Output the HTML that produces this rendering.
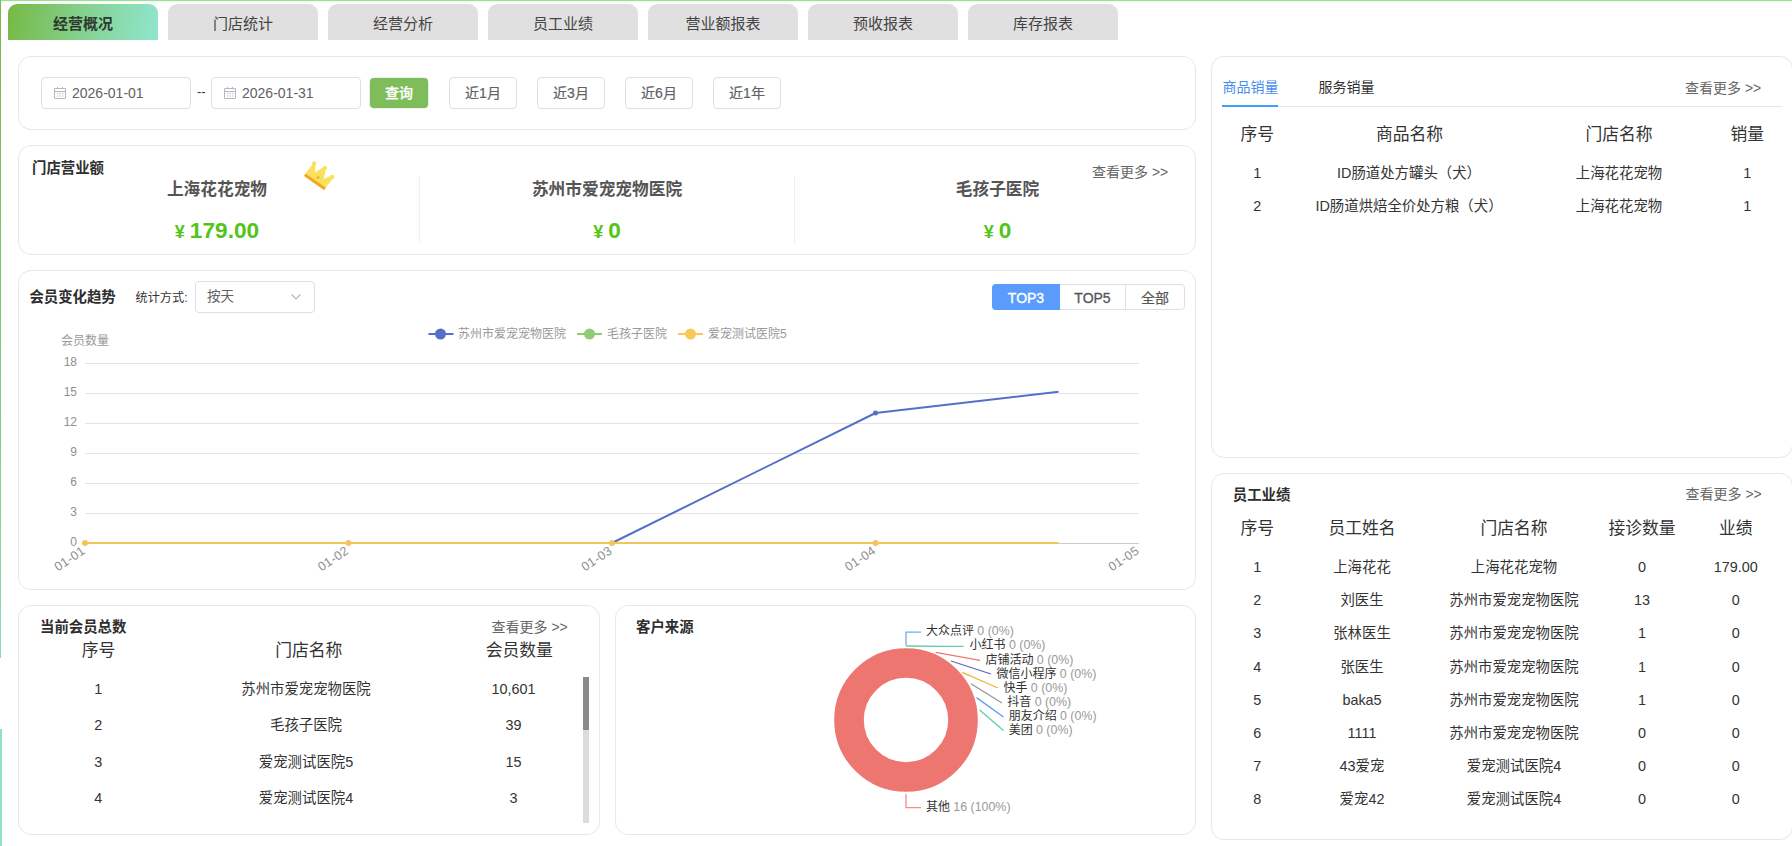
<!DOCTYPE html>
<html lang="zh-CN"><head><meta charset="utf-8"><title>经营概况</title>
<style>
html,body{margin:0;padding:0;}
body{width:1792px;height:846px;overflow:hidden;position:relative;background:#fff;font-family:"Liberation Sans", "Noto Sans CJK SC", sans-serif;}
.b{position:absolute;box-sizing:border-box;}
.t{position:absolute;height:24px;line-height:24px;white-space:nowrap;}
.card{position:absolute;box-sizing:border-box;border:1px solid #e5e7ee;border-radius:13px;background:#fff;}
.tab{position:absolute;top:4px;width:150px;height:36px;line-height:39px;text-align:center;font-size:15px;color:#444;background:#e0e0e0;border-radius:9px 9px 0 0;}
.inp{position:absolute;box-sizing:border-box;border:1px solid #dcdfe6;border-radius:4px;background:#fff;}
.btn{-webkit-text-stroke:0.2px currentColor;position:absolute;box-sizing:border-box;border:1px solid #dcdfe6;border-radius:4px;background:#fff;color:#606266;font-size:14px;text-align:center;}
svg{position:absolute;left:0;top:0;overflow:visible;}
svg text{font-family:"Liberation Sans", "Noto Sans CJK SC", sans-serif;}
</style></head><body>

<div class="b" style="left:0px;top:0px;width:1792px;height:1px;background:#8ee888;"></div>
<div class="b" style="left:1px;top:1px;width:1791px;height:2px;background:linear-gradient(#fbf1fb,#fefbfe);"></div>
<div class="b" style="left:0px;top:0px;width:1px;height:658px;background:linear-gradient(to bottom,#78bb4c 0%,#7cc46a 40%,#8fdcb8 100%);"></div>
<div class="b" style="left:0px;top:729px;width:2px;height:117px;background:#8fe3c8;"></div>
<div class="tab" style="left:8px;background:linear-gradient(100deg,#76b943 0%,#86d397 55%,#90e6cf 100%);color:#2e3a2e;font-weight:700;">经营概况</div>
<div class="tab" style="left:168px;">门店统计</div>
<div class="tab" style="left:328px;">经营分析</div>
<div class="tab" style="left:488px;">员工业绩</div>
<div class="tab" style="left:648px;">营业额报表</div>
<div class="tab" style="left:808px;">预收报表</div>
<div class="tab" style="left:968px;">库存报表</div>
<div class="card" style="left:18px;top:56px;width:1178px;height:74px;"></div>
<div class="card" style="left:18px;top:145px;width:1178px;height:110px;"></div>
<div class="card" style="left:18px;top:270px;width:1178px;height:320px;"></div>
<div class="card" style="left:18px;top:605px;width:582px;height:230px;"></div>
<div class="card" style="left:615px;top:605px;width:581px;height:230px;"></div>
<div class="card" style="left:1211px;top:56px;width:582px;height:402px;"></div>
<div class="card" style="left:1211px;top:473px;width:582px;height:367px;"></div>
<div class="inp" style="left:41px;top:77px;width:150px;height:32px;"></div>
<div class="inp" style="left:211px;top:77px;width:150px;height:32px;"></div>
<svg width="1792" height="846" style="pointer-events:none"><g fill="none" stroke="#b4b7bf" stroke-width="1"><rect x="54.5" y="88.5" width="11" height="10" rx="0.5"/><line x1="54.5" y1="91.5" x2="65.5" y2="91.5"/><line x1="57.5" y1="87" x2="57.5" y2="89"/><line x1="62.5" y1="87" x2="62.5" y2="89"/></g><g fill="#c0c4cc"><rect x="57" y="93" width="1.5" height="1"/><rect x="59.5" y="93" width="1.5" height="1"/><rect x="62" y="93" width="1.5" height="1"/><rect x="57" y="95.5" width="1.5" height="1"/><rect x="59.5" y="95.5" width="1.5" height="1"/><rect x="62" y="95.5" width="1.5" height="1"/></g></svg>
<svg width="1792" height="846" style="pointer-events:none"><g fill="none" stroke="#b4b7bf" stroke-width="1"><rect x="224.5" y="88.5" width="11" height="10" rx="0.5"/><line x1="224.5" y1="91.5" x2="235.5" y2="91.5"/><line x1="227.5" y1="87" x2="227.5" y2="89"/><line x1="232.5" y1="87" x2="232.5" y2="89"/></g><g fill="#c0c4cc"><rect x="227" y="93" width="1.5" height="1"/><rect x="229.5" y="93" width="1.5" height="1"/><rect x="232" y="93" width="1.5" height="1"/><rect x="227" y="95.5" width="1.5" height="1"/><rect x="229.5" y="95.5" width="1.5" height="1"/><rect x="232" y="95.5" width="1.5" height="1"/></g></svg>
<div class="t" style="left:72.00px;text-align:left;top:80.60px;font-size:14px;color:#606266;font-weight:400;">2026-01-01</div>
<div class="t" style="left:242.00px;text-align:left;top:80.60px;font-size:14px;color:#606266;font-weight:400;">2026-01-31</div>
<div class="t" style="left:197.00px;text-align:left;top:80.00px;font-size:13px;color:#333;font-weight:400;">--</div>
<div class="btn" style="left:370px;top:78px;width:58px;height:30px;line-height:30px;background:#7ebd5a;border:none;box-shadow:0 0 0 0.6px #d8dce8;color:#fff;font-weight:500;-webkit-text-stroke:0.25px #fff;">查询</div>
<div class="btn" style="left:449px;top:77px;width:68px;height:32px;line-height:30px;">近1月</div>
<div class="btn" style="left:537px;top:77px;width:68px;height:32px;line-height:30px;">近3月</div>
<div class="btn" style="left:625px;top:77px;width:68px;height:32px;line-height:30px;">近6月</div>
<div class="btn" style="left:713px;top:77px;width:68px;height:32px;line-height:30px;">近1年</div>
<div class="t" style="left:32.00px;text-align:left;top:156.00px;font-size:14.4px;color:#2e2e2e;font-weight:700;">门店营业额</div>
<div class="t" style="left:1092.00px;text-align:left;top:160.00px;font-size:14px;color:#666;font-weight:400;">查看更多 &gt;&gt;</div>
<div class="t" style="left:67.00px;width:300px;text-align:center;top:178.00px;font-size:16.7px;color:#555;font-weight:700;">上海花花宠物</div>
<div class="t" style="left:67.00px;width:300px;text-align:center;top:219.00px;font-size:22.6px;color:#52c41a;font-weight:700;letter-spacing:0.05px;"><span style="font-size:18px;font-weight:700;margin-right:5px;letter-spacing:0;">¥</span><span>179.00</span></div>
<div class="t" style="left:457.00px;width:300px;text-align:center;top:178.00px;font-size:16.7px;color:#555;font-weight:700;">苏州市爱宠宠物医院</div>
<div class="t" style="left:457.00px;width:300px;text-align:center;top:219.00px;font-size:22.6px;color:#52c41a;font-weight:700;letter-spacing:0.05px;"><span style="font-size:18px;font-weight:700;margin-right:5px;letter-spacing:0;">¥</span><span>0</span></div>
<div class="t" style="left:847.50px;width:300px;text-align:center;top:178.00px;font-size:16.7px;color:#555;font-weight:700;">毛孩子医院</div>
<div class="t" style="left:847.50px;width:300px;text-align:center;top:219.00px;font-size:22.6px;color:#52c41a;font-weight:700;letter-spacing:0.05px;"><span style="font-size:18px;font-weight:700;margin-right:5px;letter-spacing:0;">¥</span><span>0</span></div>
<div class="b" style="left:419px;top:176px;width:1px;height:68px;background:#eef0f4;"></div>
<div class="b" style="left:794px;top:176px;width:1px;height:68px;background:#eef0f4;"></div>
<svg width="1792" height="846"><polygon points="305.4,173.6 312.6,164.2 315.6,163.6 314.8,172.6 323.4,167.2 326.2,168.6 323.6,179.0 331.4,175.6 333.2,178.2 325.5,187.8" fill="#f9e05e"/><circle cx="314.1" cy="163.3" r="2.1" fill="#f9e05e"/><circle cx="324.9" cy="167.9" r="2.1" fill="#f9e05e"/><circle cx="332.3" cy="176.9" r="2.1" fill="#f9e05e"/><polygon points="305.6,173.4 325.8,187.6 324.2,190.3 303.9,176.0" fill="#f6a623"/><polygon points="318.1,175.7 319.6,177.5 318.1,179.3 316.6,177.5" fill="#f6a623"/></svg>
<div class="t" style="left:29.40px;text-align:left;top:284.60px;font-size:14.4px;color:#2e2e2e;font-weight:700;">会员变化趋势</div>
<div class="t" style="left:135.50px;text-align:left;top:286.00px;font-size:12.2px;color:#333;font-weight:400;">统计方式:</div>
<div class="inp" style="left:195px;top:281px;width:120px;height:32px;"></div>
<div class="t" style="left:207.00px;text-align:left;top:285.00px;font-size:13.6px;color:#606266;font-weight:400;">按天</div>
<svg width="1792" height="846"><polyline points="291.5,294.5 296,299 300.5,294.5" fill="none" stroke="#b4b8c0" stroke-width="1.2"/></svg>
<div class="btn" style="left:992px;top:284px;width:193px;height:26px;"></div>
<div class="b" style="left:992px;top:284px;width:68px;height:26px;background:#5a9cfc;border-radius:4px 0 0 4px;"></div>
<div class="b" style="left:1125px;top:284px;width:1px;height:26px;background:#dcdfe6;"></div>
<div class="t" style="left:876.00px;width:300px;text-align:center;top:285.50px;font-size:14px;color:#fff;font-weight:400;-webkit-text-stroke:0.35px #fff;">TOP3</div>
<div class="t" style="left:942.50px;width:300px;text-align:center;top:285.50px;font-size:14px;color:#555;font-weight:400;-webkit-text-stroke:0.3px #555;">TOP5</div>
<div class="t" style="left:1005.00px;width:300px;text-align:center;top:285.50px;font-size:14px;color:#555;font-weight:400;-webkit-text-stroke:0.2px #555;">全部</div>
<svg width="1792" height="846"><line x1="85" y1="363.5" x2="1139" y2="363.5" stroke="#e4e4e4" stroke-width="1"/><text x="77" y="366.0" font-size="12" fill="#8f8f8f" text-anchor="end">18</text><line x1="85" y1="393.5" x2="1139" y2="393.5" stroke="#e4e4e4" stroke-width="1"/><text x="77" y="396.0" font-size="12" fill="#8f8f8f" text-anchor="end">15</text><line x1="85" y1="423.5" x2="1139" y2="423.5" stroke="#e4e4e4" stroke-width="1"/><text x="77" y="426.0" font-size="12" fill="#8f8f8f" text-anchor="end">12</text><line x1="85" y1="453.5" x2="1139" y2="453.5" stroke="#e4e4e4" stroke-width="1"/><text x="77" y="456.0" font-size="12" fill="#8f8f8f" text-anchor="end">9</text><line x1="85" y1="483.5" x2="1139" y2="483.5" stroke="#e4e4e4" stroke-width="1"/><text x="77" y="486.0" font-size="12" fill="#8f8f8f" text-anchor="end">6</text><line x1="85" y1="513.5" x2="1139" y2="513.5" stroke="#e4e4e4" stroke-width="1"/><text x="77" y="516.0" font-size="12" fill="#8f8f8f" text-anchor="end">3</text><line x1="85" y1="543.5" x2="1139" y2="543.5" stroke="#ccc" stroke-width="1"/><text x="77" y="546.0" font-size="12" fill="#8f8f8f" text-anchor="end">0</text><text x="61" y="344.5" font-size="12" fill="#999">会员数量</text><text transform="translate(83.8,549.4) rotate(-34)" font-size="12.5" letter-spacing="0.35" fill="#8f8f8f" text-anchor="end" dominant-baseline="central">01-01</text><text transform="translate(347.3,549.4) rotate(-34)" font-size="12.5" letter-spacing="0.35" fill="#8f8f8f" text-anchor="end" dominant-baseline="central">01-02</text><text transform="translate(610.8,549.4) rotate(-34)" font-size="12.5" letter-spacing="0.35" fill="#8f8f8f" text-anchor="end" dominant-baseline="central">01-03</text><text transform="translate(874.3,549.4) rotate(-34)" font-size="12.5" letter-spacing="0.35" fill="#8f8f8f" text-anchor="end" dominant-baseline="central">01-04</text><text transform="translate(1137.8,549.4) rotate(-34)" font-size="12.5" letter-spacing="0.35" fill="#8f8f8f" text-anchor="end" dominant-baseline="central">01-05</text><polyline points="85,543 348.5,543 612,543 875.5,413 1058.5,391.8" fill="none" stroke="#5470c6" stroke-width="2" stroke-linejoin="round"/><circle cx="875.5" cy="413" r="2.5" fill="#5470c6"/><polyline points="85,543 1058.5,543" fill="none" stroke="#f0c65a" stroke-width="2"/><circle cx="85" cy="543" r="3" fill="#f0c65a"/><circle cx="348.5" cy="543" r="3" fill="#f0c65a"/><circle cx="612" cy="543" r="3" fill="#f0c65a"/><circle cx="875.5" cy="543" r="3" fill="#f0c65a"/><line x1="428.5" y1="334" x2="453.5" y2="334" stroke="#5470c6" stroke-width="2"/><circle cx="440.5" cy="334" r="5.5" fill="#5470c6"/><text x="458" y="337.5" font-size="12" fill="#999">苏州市爱宠宠物医院</text><line x1="577" y1="334" x2="602" y2="334" stroke="#91cc75" stroke-width="2"/><circle cx="589.5" cy="334" r="5.5" fill="#91cc75"/><text x="607" y="337.5" font-size="12" fill="#999">毛孩子医院</text><line x1="678" y1="334" x2="703" y2="334" stroke="#fac858" stroke-width="2"/><circle cx="690.5" cy="334" r="5.5" fill="#fac858"/><text x="708" y="337.5" font-size="12" fill="#999">爱宠测试医院5</text></svg>
<div class="t" style="left:40.00px;text-align:left;top:614.80px;font-size:14.4px;color:#2e2e2e;font-weight:700;">当前会员总数</div>
<div class="t" style="left:491.50px;text-align:left;top:614.50px;font-size:14px;color:#666;font-weight:400;">查看更多 &gt;&gt;</div>
<div class="t" style="left:-51.50px;width:300px;text-align:center;top:639.00px;font-size:16.8px;color:#333;font-weight:400;">序号</div>
<div class="t" style="left:158.80px;width:300px;text-align:center;top:639.00px;font-size:16.8px;color:#333;font-weight:400;">门店名称</div>
<div class="t" style="left:369.30px;width:300px;text-align:center;top:639.00px;font-size:16.8px;color:#333;font-weight:400;">会员数量</div>
<div class="t" style="left:-51.70px;width:300px;text-align:center;top:677.30px;font-size:14.4px;color:#333;font-weight:400;">1</div>
<div class="t" style="left:156.00px;width:300px;text-align:center;top:677.30px;font-size:14.4px;color:#333;font-weight:400;">苏州市爱宠宠物医院</div>
<div class="t" style="left:363.50px;width:300px;text-align:center;top:677.30px;font-size:14.4px;color:#333;font-weight:400;">10,601</div>
<div class="t" style="left:-51.70px;width:300px;text-align:center;top:713.00px;font-size:14.4px;color:#333;font-weight:400;">2</div>
<div class="t" style="left:156.00px;width:300px;text-align:center;top:713.00px;font-size:14.4px;color:#333;font-weight:400;">毛孩子医院</div>
<div class="t" style="left:363.50px;width:300px;text-align:center;top:713.00px;font-size:14.4px;color:#333;font-weight:400;">39</div>
<div class="t" style="left:-51.70px;width:300px;text-align:center;top:750.00px;font-size:14.4px;color:#333;font-weight:400;">3</div>
<div class="t" style="left:156.00px;width:300px;text-align:center;top:750.00px;font-size:14.4px;color:#333;font-weight:400;">爱宠测试医院5</div>
<div class="t" style="left:363.50px;width:300px;text-align:center;top:750.00px;font-size:14.4px;color:#333;font-weight:400;">15</div>
<div class="t" style="left:-51.70px;width:300px;text-align:center;top:786.00px;font-size:14.4px;color:#333;font-weight:400;">4</div>
<div class="t" style="left:156.00px;width:300px;text-align:center;top:786.00px;font-size:14.4px;color:#333;font-weight:400;">爱宠测试医院4</div>
<div class="t" style="left:363.50px;width:300px;text-align:center;top:786.00px;font-size:14.4px;color:#333;font-weight:400;">3</div>
<div class="b" style="left:583px;top:677px;width:6px;height:146px;background:#dcdcdc;"></div>
<div class="b" style="left:583px;top:677px;width:6px;height:53px;background:#8a8a8a;"></div>
<div class="t" style="left:636.00px;text-align:left;top:614.80px;font-size:14.4px;color:#2e2e2e;font-weight:700;">客户来源</div>
<svg width="1792" height="846"><circle cx="906" cy="720" r="57" fill="none" stroke="#ed7670" stroke-width="29.6"/><polyline points="906,645.5 906,632.2 921,632.2" fill="none" stroke="#73a9ee" stroke-width="1.3"/><polyline points="906,646 948,646.3 963.5,646.3" fill="none" stroke="#5fcfa5" stroke-width="1.3"/><polyline points="935.6,652.3 980,660.3" fill="none" stroke="#ee7670" stroke-width="1.3"/><polyline points="951,661 991,674" fill="none" stroke="#5a6ab0" stroke-width="1.3"/><polyline points="962.3,672.4 998,688" fill="none" stroke="#f0b43c" stroke-width="1.3"/><polyline points="971,683.8 1002,703" fill="none" stroke="#999999" stroke-width="1.3"/><polyline points="976.5,697.6 1003.5,717" fill="none" stroke="#5b9cf5" stroke-width="1.3"/><polyline points="979.6,710 1003.5,730.5" fill="none" stroke="#5fcfa5" stroke-width="1.3"/><polyline points="906,794 906,807.6 921,807.6" fill="none" stroke="#f0908b" stroke-width="1.3"/><text x="926" y="635.2" font-size="12" fill="#333">大众点评 <tspan fill="#999" font-size="12.4">0 (0%)</tspan></text><text x="969.6" y="649.2" font-size="12" fill="#333">小红书 <tspan fill="#999" font-size="12.4">0 (0%)</tspan></text><text x="985.5" y="663.9" font-size="12" fill="#333">店铺活动 <tspan fill="#999" font-size="12.4">0 (0%)</tspan></text><text x="996.5" y="677.7" font-size="12" fill="#333">微信小程序 <tspan fill="#999" font-size="12.4">0 (0%)</tspan></text><text x="1003.5" y="691.9" font-size="12" fill="#333">快手 <tspan fill="#999" font-size="12.4">0 (0%)</tspan></text><text x="1007.3" y="705.7" font-size="12" fill="#333">抖音 <tspan fill="#999" font-size="12.4">0 (0%)</tspan></text><text x="1008.7" y="719.6" font-size="12" fill="#333">朋友介绍 <tspan fill="#999" font-size="12.4">0 (0%)</tspan></text><text x="1008.7" y="734.0" font-size="12" fill="#333">美团 <tspan fill="#999" font-size="12.4">0 (0%)</tspan></text><text x="926" y="810.9" font-size="12" fill="#333">其他 <tspan fill="#999" font-size="12.4">16 (100%)</tspan></text></svg>
<div class="t" style="left:1222.50px;text-align:left;top:75.30px;font-size:14px;color:#4a8df0;font-weight:400;">商品销量</div>
<div class="t" style="left:1318.50px;text-align:left;top:75.30px;font-size:14px;color:#303133;font-weight:400;">服务销量</div>
<div class="t" style="left:1685.00px;text-align:left;top:76.00px;font-size:14px;color:#666;font-weight:400;">查看更多 &gt;&gt;</div>
<div class="b" style="left:1222px;top:105px;width:560px;height:2px;background:#e4e7ed;top:105.5px;height:1.5px;"></div>
<div class="b" style="left:1222px;top:104px;width:56px;height:2px;background:#409eff;top:104.5px;"></div>
<div class="t" style="left:1107.30px;width:300px;text-align:center;top:123.00px;font-size:16.8px;color:#333;font-weight:400;">序号</div>
<div class="t" style="left:1259.50px;width:300px;text-align:center;top:123.00px;font-size:16.8px;color:#333;font-weight:400;">商品名称</div>
<div class="t" style="left:1469.00px;width:300px;text-align:center;top:123.00px;font-size:16.8px;color:#333;font-weight:400;">门店名称</div>
<div class="t" style="left:1597.30px;width:300px;text-align:center;top:123.00px;font-size:16.8px;color:#333;font-weight:400;">销量</div>
<div class="t" style="left:1107.30px;width:300px;text-align:center;top:161.00px;font-size:14.4px;color:#333;font-weight:400;">1</div>
<div class="t" style="left:1259.00px;width:300px;text-align:center;top:161.00px;font-size:14.4px;color:#333;font-weight:400;">ID肠道处方罐头（犬）</div>
<div class="t" style="left:1469.00px;width:300px;text-align:center;top:161.00px;font-size:14.4px;color:#333;font-weight:400;">上海花花宠物</div>
<div class="t" style="left:1597.30px;width:300px;text-align:center;top:161.00px;font-size:14.4px;color:#333;font-weight:400;">1</div>
<div class="t" style="left:1107.30px;width:300px;text-align:center;top:193.80px;font-size:14.4px;color:#333;font-weight:400;">2</div>
<div class="t" style="left:1259.00px;width:300px;text-align:center;top:193.80px;font-size:14.4px;color:#333;font-weight:400;">ID肠道烘焙全价处方粮（犬）</div>
<div class="t" style="left:1469.00px;width:300px;text-align:center;top:193.80px;font-size:14.4px;color:#333;font-weight:400;">上海花花宠物</div>
<div class="t" style="left:1597.30px;width:300px;text-align:center;top:193.80px;font-size:14.4px;color:#333;font-weight:400;">1</div>
<div class="t" style="left:1232.80px;text-align:left;top:482.80px;font-size:14.4px;color:#2e2e2e;font-weight:700;">员工业绩</div>
<div class="t" style="left:1685.50px;text-align:left;top:481.80px;font-size:14px;color:#666;font-weight:400;">查看更多 &gt;&gt;</div>
<div class="t" style="left:1107.30px;width:300px;text-align:center;top:517.00px;font-size:16.8px;color:#333;font-weight:400;">序号</div>
<div class="t" style="left:1212.00px;width:300px;text-align:center;top:517.00px;font-size:16.8px;color:#333;font-weight:400;">员工姓名</div>
<div class="t" style="left:1364.00px;width:300px;text-align:center;top:517.00px;font-size:16.8px;color:#333;font-weight:400;">门店名称</div>
<div class="t" style="left:1492.00px;width:300px;text-align:center;top:517.00px;font-size:16.8px;color:#333;font-weight:400;">接诊数量</div>
<div class="t" style="left:1585.70px;width:300px;text-align:center;top:517.00px;font-size:16.8px;color:#333;font-weight:400;">业绩</div>
<div class="t" style="left:1107.30px;width:300px;text-align:center;top:555.20px;font-size:14.4px;color:#333;font-weight:400;">1</div>
<div class="t" style="left:1212.00px;width:300px;text-align:center;top:555.20px;font-size:14.4px;color:#333;font-weight:400;">上海花花</div>
<div class="t" style="left:1364.00px;width:300px;text-align:center;top:555.20px;font-size:14.4px;color:#333;font-weight:400;">上海花花宠物</div>
<div class="t" style="left:1492.00px;width:300px;text-align:center;top:555.20px;font-size:14.4px;color:#333;font-weight:400;">0</div>
<div class="t" style="left:1585.70px;width:300px;text-align:center;top:555.20px;font-size:14.4px;color:#333;font-weight:400;">179.00</div>
<div class="t" style="left:1107.30px;width:300px;text-align:center;top:588.32px;font-size:14.4px;color:#333;font-weight:400;">2</div>
<div class="t" style="left:1212.00px;width:300px;text-align:center;top:588.32px;font-size:14.4px;color:#333;font-weight:400;">刘医生</div>
<div class="t" style="left:1364.00px;width:300px;text-align:center;top:588.32px;font-size:14.4px;color:#333;font-weight:400;">苏州市爱宠宠物医院</div>
<div class="t" style="left:1492.00px;width:300px;text-align:center;top:588.32px;font-size:14.4px;color:#333;font-weight:400;">13</div>
<div class="t" style="left:1585.70px;width:300px;text-align:center;top:588.32px;font-size:14.4px;color:#333;font-weight:400;">0</div>
<div class="t" style="left:1107.30px;width:300px;text-align:center;top:621.44px;font-size:14.4px;color:#333;font-weight:400;">3</div>
<div class="t" style="left:1212.00px;width:300px;text-align:center;top:621.44px;font-size:14.4px;color:#333;font-weight:400;">张林医生</div>
<div class="t" style="left:1364.00px;width:300px;text-align:center;top:621.44px;font-size:14.4px;color:#333;font-weight:400;">苏州市爱宠宠物医院</div>
<div class="t" style="left:1492.00px;width:300px;text-align:center;top:621.44px;font-size:14.4px;color:#333;font-weight:400;">1</div>
<div class="t" style="left:1585.70px;width:300px;text-align:center;top:621.44px;font-size:14.4px;color:#333;font-weight:400;">0</div>
<div class="t" style="left:1107.30px;width:300px;text-align:center;top:654.56px;font-size:14.4px;color:#333;font-weight:400;">4</div>
<div class="t" style="left:1212.00px;width:300px;text-align:center;top:654.56px;font-size:14.4px;color:#333;font-weight:400;">张医生</div>
<div class="t" style="left:1364.00px;width:300px;text-align:center;top:654.56px;font-size:14.4px;color:#333;font-weight:400;">苏州市爱宠宠物医院</div>
<div class="t" style="left:1492.00px;width:300px;text-align:center;top:654.56px;font-size:14.4px;color:#333;font-weight:400;">1</div>
<div class="t" style="left:1585.70px;width:300px;text-align:center;top:654.56px;font-size:14.4px;color:#333;font-weight:400;">0</div>
<div class="t" style="left:1107.30px;width:300px;text-align:center;top:687.68px;font-size:14.4px;color:#333;font-weight:400;">5</div>
<div class="t" style="left:1212.00px;width:300px;text-align:center;top:687.68px;font-size:14.4px;color:#333;font-weight:400;">baka5</div>
<div class="t" style="left:1364.00px;width:300px;text-align:center;top:687.68px;font-size:14.4px;color:#333;font-weight:400;">苏州市爱宠宠物医院</div>
<div class="t" style="left:1492.00px;width:300px;text-align:center;top:687.68px;font-size:14.4px;color:#333;font-weight:400;">1</div>
<div class="t" style="left:1585.70px;width:300px;text-align:center;top:687.68px;font-size:14.4px;color:#333;font-weight:400;">0</div>
<div class="t" style="left:1107.30px;width:300px;text-align:center;top:720.80px;font-size:14.4px;color:#333;font-weight:400;">6</div>
<div class="t" style="left:1212.00px;width:300px;text-align:center;top:720.80px;font-size:14.4px;color:#333;font-weight:400;">1111</div>
<div class="t" style="left:1364.00px;width:300px;text-align:center;top:720.80px;font-size:14.4px;color:#333;font-weight:400;">苏州市爱宠宠物医院</div>
<div class="t" style="left:1492.00px;width:300px;text-align:center;top:720.80px;font-size:14.4px;color:#333;font-weight:400;">0</div>
<div class="t" style="left:1585.70px;width:300px;text-align:center;top:720.80px;font-size:14.4px;color:#333;font-weight:400;">0</div>
<div class="t" style="left:1107.30px;width:300px;text-align:center;top:753.92px;font-size:14.4px;color:#333;font-weight:400;">7</div>
<div class="t" style="left:1212.00px;width:300px;text-align:center;top:753.92px;font-size:14.4px;color:#333;font-weight:400;">43爱宠</div>
<div class="t" style="left:1364.00px;width:300px;text-align:center;top:753.92px;font-size:14.4px;color:#333;font-weight:400;">爱宠测试医院4</div>
<div class="t" style="left:1492.00px;width:300px;text-align:center;top:753.92px;font-size:14.4px;color:#333;font-weight:400;">0</div>
<div class="t" style="left:1585.70px;width:300px;text-align:center;top:753.92px;font-size:14.4px;color:#333;font-weight:400;">0</div>
<div class="t" style="left:1107.30px;width:300px;text-align:center;top:787.04px;font-size:14.4px;color:#333;font-weight:400;">8</div>
<div class="t" style="left:1212.00px;width:300px;text-align:center;top:787.04px;font-size:14.4px;color:#333;font-weight:400;">爱宠42</div>
<div class="t" style="left:1364.00px;width:300px;text-align:center;top:787.04px;font-size:14.4px;color:#333;font-weight:400;">爱宠测试医院4</div>
<div class="t" style="left:1492.00px;width:300px;text-align:center;top:787.04px;font-size:14.4px;color:#333;font-weight:400;">0</div>
<div class="t" style="left:1585.70px;width:300px;text-align:center;top:787.04px;font-size:14.4px;color:#333;font-weight:400;">0</div>
</body></html>
